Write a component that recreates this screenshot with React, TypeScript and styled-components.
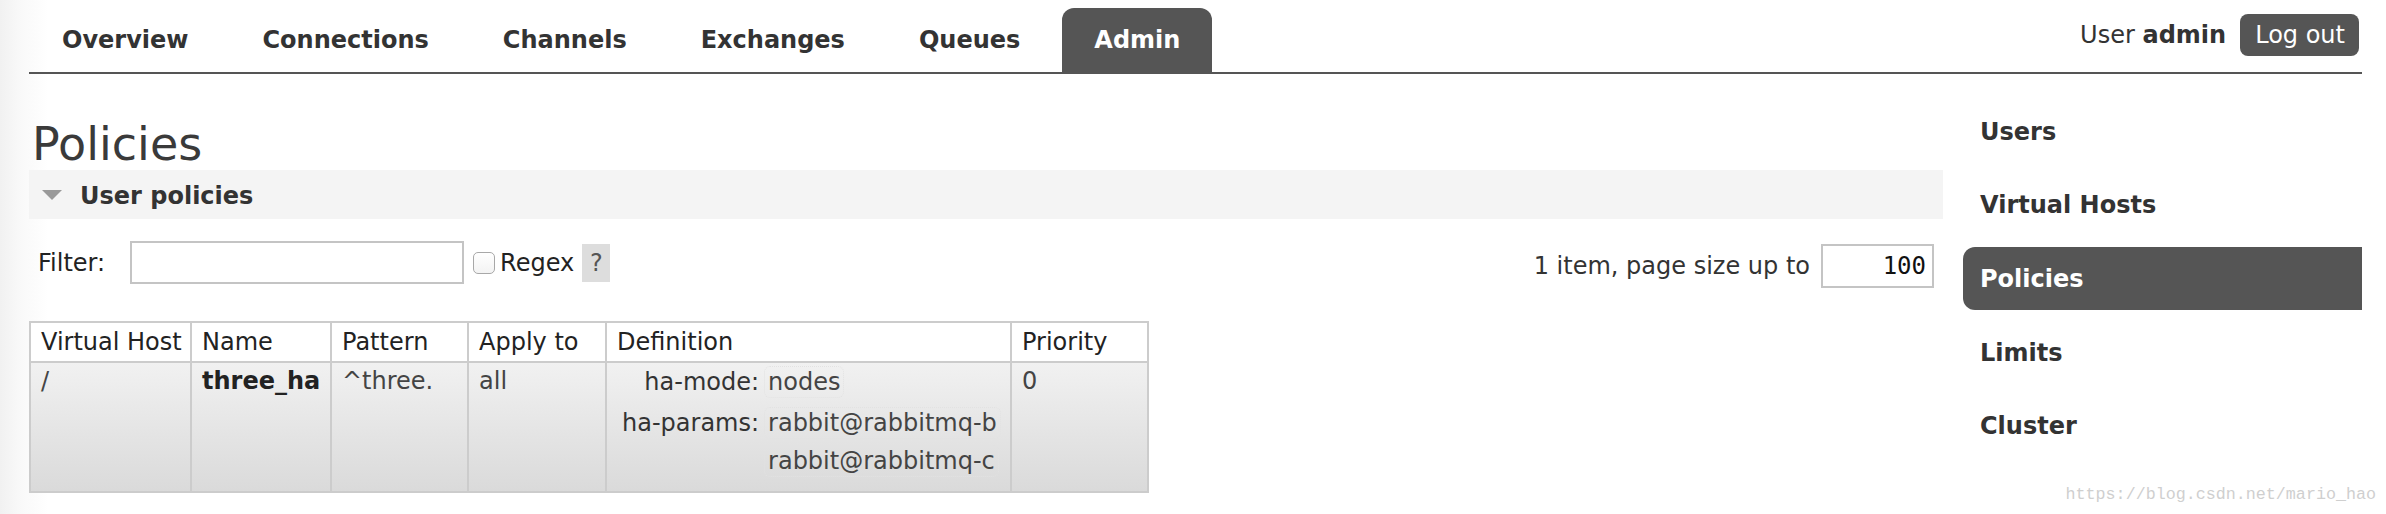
import React from "react";
import styled, { createGlobalStyle } from "styled-components";

const GlobalStyle = createGlobalStyle`
  html, body { margin: 0; padding: 0; }
  body {
    font-family: "DejaVu Sans", Verdana, sans-serif;
    font-size: 24px;
    color: #444;
    background: linear-gradient(90deg, #f1f1f1 0px, #f8f8f8 18px, #ffffff 48px);
    min-height: 514px;
  }
  * { box-sizing: border-box; }
`;

const Page = styled.div`
  position: relative;
  padding: 0 24px 0 29px;
  height: 514px;
  overflow: hidden;
`;

const Header = styled.header`
  display: flex;
  justify-content: space-between;
  align-items: flex-start;
  height: 74px;
  border-bottom: 2px solid #555;
`;

const Tabs = styled.nav`
  display: flex;
  gap: 10px;
  padding-top: 8px;
  padding-left: 1px;
`;

const Tab = styled.a<{ $active?: boolean }>`
  display: flex;
  align-items: center;
  height: 64px;
  padding: 0 32px;
  font-weight: bold;
  font-size: 24px;
  line-height: 28px;
  color: ${(p) => (p.$active ? "#fff" : "#333")};
  background: ${(p) => (p.$active ? "#555" : "transparent")};
  border-radius: 12px 12px 0 0;
  text-decoration: none;
`;

const UserBox = styled.div`
  display: flex;
  align-items: center;
  margin-top: 14px;
  margin-right: 3px;
  font-size: 24px;
  line-height: 28px;
  color: #333;
  b { margin-left: 0.32em; font-weight: bold; }
`;

const LogoutButton = styled.button`
  margin-left: 14px;
  height: 42px;
  padding: 0 14px 0 15px;
  background: #555;
  color: #fff;
  border: none;
  border-radius: 8px;
  font-family: inherit;
  font-size: 24px;
  line-height: 28px;
`;

const Body = styled.div`
  display: flex;
  align-items: flex-start;
`;

const Main = styled.main`
  width: 1914px;
  flex: none;
`;

const Title = styled.h1`
  margin: 45px 0 0 3px;
  font-size: 46px;
  line-height: 51px;
  font-weight: normal;
  color: #3a3a3a;
`;

const SectionBar = styled.div`
  display: flex;
  align-items: center;
  height: 49px;
  padding: 3px 0 0 13px;
  background: #f4f4f4;
  font-weight: bold;
  color: #333;
  line-height: 28px;
`;

const Triangle = styled.span`
  width: 0;
  height: 0;
  border-left: 10px solid transparent;
  border-right: 10px solid transparent;
  border-top: 10px solid #999;
  margin-right: 18px;
  margin-top: -3px;
`;

const Toolbar = styled.div`
  display: flex;
  justify-content: space-between;
  align-items: flex-start;
`;

const FilterGroup = styled.div`
  display: flex;
  align-items: center;
  margin-top: 22px;
  padding-left: 9px;
  line-height: 28px;
  color: #222;
`;

const TextInput = styled.input<{ $w: number; $h: number }>`
  width: ${(p) => p.$w}px;
  height: ${(p) => p.$h}px;
  border: 2px solid #c4c4c4;
  background: #fff;
  font-family: "DejaVu Sans Mono", monospace;
  font-size: 24px;
  color: #111;
  padding: 0 6px;
  text-align: right;
  outline: none;
`;

const FilterInput = styled(TextInput)`
  margin-left: 25px;
`;

const Check = styled.span`
  display: inline-block;
  width: 22px;
  height: 22px;
  margin-left: 9px;
  border: 1px solid #a8a8a8;
  border-radius: 5px;
  background: linear-gradient(#fff, #f3f3f3);
`;

const CheckLabel = styled.span`
  margin-left: 5px;
`;

const Help = styled.span`
  display: flex;
  align-items: center;
  justify-content: center;
  width: 28px;
  height: 38px;
  margin-left: 8px;
  background: #ddd;
  color: #555;
`;

const PagingGroup = styled.div`
  display: flex;
  align-items: center;
  margin-top: 25px;
  margin-right: 9px;
  line-height: 28px;
  color: #333;
`;

const PageSizeInput = styled(TextInput)`
  margin-left: 11px;
`;

const Table = styled.table`
  margin-top: 33px;
  border-collapse: separate;
  border-spacing: 0;
  border: 2px solid #ccc;
  table-layout: fixed;
  width: 1120px;
  line-height: 28px;
`;

const Th = styled.th<{ $w: number; $first?: boolean }>`
  width: ${(p) => p.$w}px;
  padding: 5px 10px;
  text-align: left;
  font-weight: normal;
  color: #222;
  background: #fff;
  border-bottom: 2px solid #ccc;
  border-left: ${(p) => (p.$first ? "none" : "2px solid #ccc")};
  white-space: nowrap;
  overflow: hidden;
`;

const BodyRow = styled.tr`
  background: linear-gradient(#f1f1f1, #dadada);
`;

const Td = styled.td<{ $first?: boolean }>`
  vertical-align: top;
  padding: 4px 10px 8px;
  border-left: ${(p) => (p.$first ? "none" : "2px solid #ccc")};
  color: #444;
  white-space: nowrap;
  overflow: hidden;
  b { color: #222; }
`;

const DefGrid = styled.div`
  display: grid;
  grid-template-columns: auto auto;
  justify-content: start;
  column-gap: 7px;
  row-gap: 3px;
  padding-left: 5px;
  margin-top: -1px;
`;

const DefKey = styled.div`
  text-align: right;
  padding-top: 2px;
  color: #333;
`;

const DefValues = styled.div`
  display: flex;
  flex-direction: column;
  align-items: flex-start;
`;

const DefValue = styled.span`
  padding: 1px 3px;
  border: 1px dotted #e2e2e2;
  border-radius: 6px;
  margin-bottom: 6px;
  margin-left: -2px;
  color: #444;
`;

const Sidebar = styled.aside`
  width: 400px;
  margin-left: 20px;
  padding-top: 26px;
  display: flex;
  flex-direction: column;
  gap: 10.7px;
`;

const SideItem = styled.a<{ $active?: boolean }>`
  display: flex;
  align-items: center;
  height: 63px;
  padding-left: 17px;
  font-weight: bold;
  font-size: 24px;
  line-height: 28px;
  color: ${(p) => (p.$active ? "#fff" : "#333")};
  background: ${(p) => (p.$active ? "#555" : "transparent")};
  border-radius: 12px 0 0 12px;
  text-decoration: none;
`;

const Watermark = styled.div`
  position: absolute;
  right: 10px;
  bottom: 9px;
  font-family: "Liberation Mono", "DejaVu Sans Mono", monospace;
  font-size: 16.7px;
  line-height: 20px;
  color: #cfcfcf;
`;

const tabs = ["Overview", "Connections", "Channels", "Exchanges", "Queues", "Admin"];
const sideItems = ["Users", "Virtual Hosts", "Policies", "Limits", "Cluster"];
const columns: [string, number][] = [
  ["Virtual Host", 159],
  ["Name", 140],
  ["Pattern", 137],
  ["Apply to", 138],
  ["Definition", 405],
  ["Priority", 137],
];

export default function App() {
  return (
    <>
      <GlobalStyle />
      <Page>
        <Header>
          <Tabs>
            {tabs.map((t) => (
              <Tab key={t} $active={t === "Admin"}>
                {t}
              </Tab>
            ))}
          </Tabs>
          <UserBox>
            User<b>admin</b>
            <LogoutButton>Log out</LogoutButton>
          </UserBox>
        </Header>
        <Body>
          <Main>
            <Title>Policies</Title>
            <SectionBar>
              <Triangle />
              User policies
            </SectionBar>
            <Toolbar>
              <FilterGroup>
                Filter:
                <FilterInput $w={334} $h={43} defaultValue="" />
                <Check />
                <CheckLabel>Regex</CheckLabel>
                <Help>?</Help>
              </FilterGroup>
              <PagingGroup>
                1 item, page size up to
                <PageSizeInput $w={113} $h={44} defaultValue="100" />
              </PagingGroup>
            </Toolbar>
            <Table>
              <thead>
                <tr>
                  {columns.map(([c, w], i) => (
                    <Th key={c} $w={w} $first={i === 0}>
                      {c}
                    </Th>
                  ))}
                </tr>
              </thead>
              <tbody>
                <BodyRow>
                  <Td $first>/</Td>
                  <Td>
                    <b>three_ha</b>
                  </Td>
                  <Td>^three.</Td>
                  <Td>all</Td>
                  <Td>
                    <DefGrid>
                      <DefKey>ha-mode:</DefKey>
                      <DefValues>
                        <DefValue>nodes</DefValue>
                      </DefValues>
                      <DefKey>ha-params:</DefKey>
                      <DefValues>
                        <DefValue>rabbit@rabbitmq-b</DefValue>
                        <DefValue>rabbit@rabbitmq-c</DefValue>
                      </DefValues>
                    </DefGrid>
                  </Td>
                  <Td>0</Td>
                </BodyRow>
              </tbody>
            </Table>
          </Main>
          <Sidebar>
            {sideItems.map((s) => (
              <SideItem key={s} $active={s === "Policies"}>
                {s}
              </SideItem>
            ))}
          </Sidebar>
        </Body>
        <Watermark>https://blog.csdn.net/mario_hao</Watermark>
      </Page>
    </>
  );
}
